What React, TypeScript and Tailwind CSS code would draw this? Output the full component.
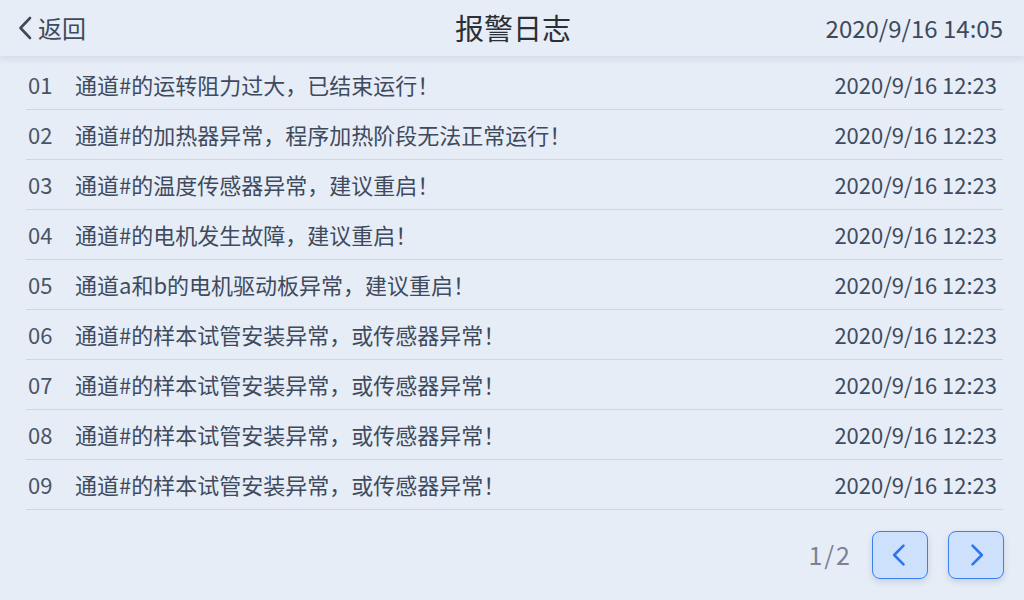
const rows = [
  { id: "01", text: "通道#的运转阻力过大，已结束运行！" },
  { id: "02", text: "通道#的加热器异常，程序加热阶段无法正常运行！" },
  { id: "03", text: "通道#的温度传感器异常，建议重启！" },
  { id: "04", text: "通道#的电机发生故障，建议重启！" },
  { id: "05", text: "通道a和b的电机驱动板异常，建议重启！" },
  { id: "06", text: "通道#的样本试管安装异常，或传感器异常！" },
  { id: "07", text: "通道#的样本试管安装异常，或传感器异常！" },
  { id: "08", text: "通道#的样本试管安装异常，或传感器异常！" },
  { id: "09", text: "通道#的样本试管安装异常，或传感器异常！" },
];

const font = { fontFamily: '"Noto Sans CJK SC", "Noto Sans", sans-serif' };

const Chevron = ({ dir, className }: { dir: "left" | "right"; className: string }) => (
  <svg viewBox="0 0 24 24" className={className} fill="none" stroke="currentColor" strokeWidth={2.2} strokeLinecap="round" strokeLinejoin="round">
    {dir === "left" ? <path d="M15 4 7 12l8 8" /> : <path d="M9 4l8 8-8 8" />}
  </svg>
);

export default function App() {
  return (
    <div className="w-[1024px] h-[600px] bg-[#e6edf7] flex flex-col overflow-hidden" style={font}>
      <header className="h-[56px] shrink-0 flex items-center justify-between pl-[17px] pr-[21px] bg-[#e6edf7] shadow-[0_3px_6px_rgba(100,120,150,0.15)] relative z-10">
        <div className="flex items-center w-[226px] text-[24px] text-[#3f4a5c]">
          <svg viewBox="0 0 16 24" className="w-[16px] h-[24px]" fill="none" stroke="currentColor" strokeWidth={2.6} strokeLinecap="round" strokeLinejoin="round">
            <path d="M13 2 3.5 12l9.5 10" />
          </svg>
          <span className="ml-[5px]">返回</span>
        </div>
        <h1 className="text-[29px] text-[#2b2f36]">报警日志</h1>
        <div className="w-[220px] text-right text-[24px] text-[#3f4a5c]">2020/9/16 14:05</div>
      </header>

      <div className="mt-[4px] ml-[26px] mr-[21px] flex flex-col">
        {rows.map((r) => (
          <div key={r.id} className="h-[50px] flex items-center border-b border-[#cdd6e4] text-[22px] text-[#3f4a5c]">
            <span className="w-[49px] pl-[2px] text-[#4a5466]">{r.id}</span>
            <span className="flex-1">{r.text}</span>
            <span className="pr-[6px]">2020/9/16 12:23</span>
          </div>
        ))}
      </div>

      <div className="flex items-center justify-end mt-[21px] mr-[20px] gap-[20px]">
        <span className="text-[25px] tracking-[2px] text-[#7a8396]">1/2</span>
        <button className="w-[56px] h-[48px] rounded-[8px] bg-[#cde0fc] border border-[#3d7ff0] flex items-center justify-center shadow-[0_3px_6px_rgba(80,100,140,0.2)] text-[#2f74ee]">
          <Chevron dir="left" className="w-[28px] h-[28px]" />
        </button>
        <button className="w-[56px] h-[48px] rounded-[8px] bg-[#cde0fc] border border-[#3d7ff0] flex items-center justify-center shadow-[0_3px_6px_rgba(80,100,140,0.2)] text-[#2f74ee]">
          <Chevron dir="right" className="w-[28px] h-[28px]" />
        </button>
      </div>
    </div>
  );
}
